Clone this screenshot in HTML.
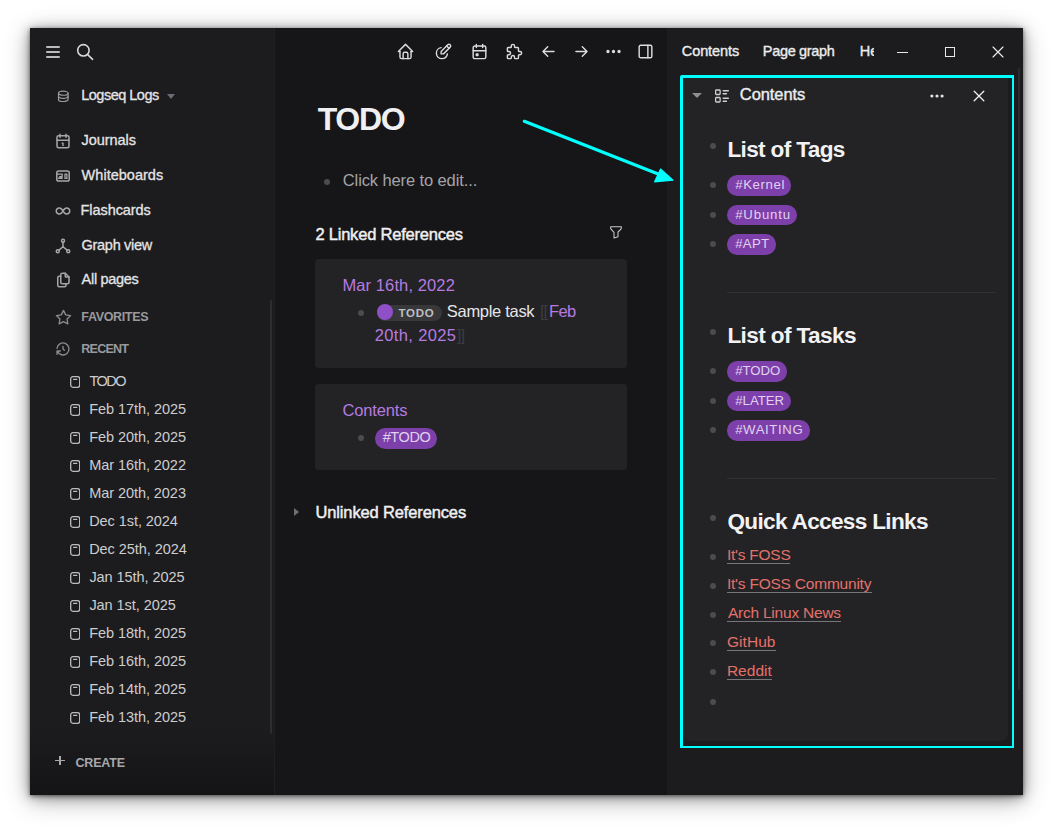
<!DOCTYPE html>
<html lang="en"><head><meta charset="utf-8"><title>TODO - Logseq</title><style>
html,body{margin:0;padding:0;}
body{width:1053px;height:827px;background:#fff;position:relative;overflow:hidden;font-family:"Liberation Sans", sans-serif;}
.b{position:absolute;}
.t{position:absolute;white-space:nowrap;}
.win{box-shadow:0 1px 4px rgba(0,0,0,.5), 0 2px 12px rgba(0,0,0,.34), 0 5px 24px rgba(0,0,0,.3);}
</style></head>
<body>
<div class="b win" style="left:30px;top:28px;width:993px;height:767px;background:#1c1c1e;"></div>
<div class="b" style="left:275px;top:28px;width:392px;height:767px;background:#161618;"></div>
<div class="b" style="left:274px;top:28px;width:1px;height:767px;background:#202022;"></div>
<div class="b" style="left:45.6px;top:46.25px;width:14.8px;height:1.6px;background:#bababc;border-radius:1px;"></div>
<div class="b" style="left:45.6px;top:51.25px;width:14.8px;height:1.6px;background:#bababc;border-radius:1px;"></div>
<div class="b" style="left:45.6px;top:56.25px;width:14.8px;height:1.6px;background:#bababc;border-radius:1px;"></div>
<svg class="b" style="left:75px;top:42px;" width="20" height="20" viewBox="0 0 20 20" fill="none" stroke="#d8d8da" stroke-width="1.6" stroke-linecap="round" stroke-linejoin="round"><circle cx="8.4" cy="8.3" r="5.7"/><path d="M12.7 12.6L17.6 17.3"/></svg>
<svg class="b" style="left:56.6px;top:89.6px;" width="12.6" height="12.6" viewBox="0 0 20 20" fill="none" stroke="#9c9ca0" stroke-width="1.9" stroke-linecap="round" stroke-linejoin="round"><ellipse cx="10" cy="5" rx="7.6" ry="3.3"/><path d="M2.4 5v10a7.6 3.3 0 0 0 15.2 0v-10"/><path d="M2.4 10a7.6 3.3 0 0 0 15.2 0"/></svg>
<div class="t " style="left:81.20px;top:88px;font-size:14.5px;line-height:14.5px;color:#e4e4e6;letter-spacing:-0.5px;-webkit-text-stroke:0.3px #e4e4e6;">Logseq Logs</div>
<div class="b" style="left:167px;top:93.5px;width:0;height:0;border-left:4px solid transparent;border-right:4px solid transparent;border-top:5px solid #6c6c78;"></div>
<div class="t " style="left:81.60px;top:133px;font-size:14.5px;line-height:14.5px;color:#e4e4e6;letter-spacing:-0.06px;-webkit-text-stroke:0.3px #e4e4e6;">Journals</div>
<div class="t " style="left:81.60px;top:168px;font-size:14.5px;line-height:14.5px;color:#e4e4e6;letter-spacing:0.02px;-webkit-text-stroke:0.3px #e4e4e6;">Whiteboards</div>
<div class="t " style="left:80.60px;top:203px;font-size:14.5px;line-height:14.5px;color:#e4e4e6;letter-spacing:-0.08px;-webkit-text-stroke:0.3px #e4e4e6;">Flashcards</div>
<div class="t " style="left:81.60px;top:238px;font-size:14.5px;line-height:14.5px;color:#e4e4e6;letter-spacing:-0.3px;-webkit-text-stroke:0.3px #e4e4e6;">Graph view</div>
<div class="t " style="left:81.60px;top:272px;font-size:14.5px;line-height:14.5px;color:#e4e4e6;letter-spacing:-0.3px;-webkit-text-stroke:0.3px #e4e4e6;">All pages</div>
<svg class="b" style="left:54px;top:132.2px;" width="18" height="18" viewBox="0 0 24 24" fill="none" stroke="#a6a6aa" stroke-width="2" stroke-linecap="round" stroke-linejoin="round"><rect x="4" y="5" width="16" height="16" rx="2"/><path d="M16 3v4M8 3v4M4 11h16"/><path d="M11 15h1v3" stroke-width="1.9"/></svg>
<svg class="b" style="left:54px;top:167px;" width="18" height="18" viewBox="0 0 24 24" fill="none" stroke="#a6a6aa" stroke-width="2" stroke-linecap="round" stroke-linejoin="round"><rect x="3.7" y="5.4" width="16.6" height="13.2" rx="2.4"/><path d="M3.7 9.4h7.2v3.6h-3.4M6 15h5M14.6 9.4h2.6v5.8h-2.6z" stroke-width="1.7"/></svg>
<svg class="b" style="left:54px;top:202px;" width="18" height="18" viewBox="0 0 24 24" fill="none" stroke="#a6a6aa" stroke-width="2" stroke-linecap="round" stroke-linejoin="round"><path d="M9.828 9.172a4 4 0 1 0 0 5.656a10 10 0 0 0 2.172 -2.828a10 10 0 0 1 2.172 -2.828a4 4 0 1 1 0 5.656a10 10 0 0 1 -2.172 -2.828a10 10 0 0 0 -2.172 -2.828"/></svg>
<svg class="b" style="left:54px;top:237.1px;" width="18" height="18" viewBox="0 0 24 24" fill="none" stroke="#a6a6aa" stroke-width="2" stroke-linecap="round" stroke-linejoin="round"><circle cx="12" cy="5" r="2"/><circle cx="5" cy="19" r="2"/><circle cx="19" cy="19" r="2"/><path d="M6.5 17.5l5.500 -4.500l5.500 4.500"/><path d="M12 7v6"/></svg>
<svg class="b" style="left:54px;top:270.7px;" width="18" height="18" viewBox="0 0 24 24" fill="none" stroke="#a6a6aa" stroke-width="2" stroke-linecap="round" stroke-linejoin="round"><path d="M15 3v4a1 1 0 0 0 1 1h4"/><path d="M18 17h-7a2 2 0 0 1 -2 -2v-10a2 2 0 0 1 2 -2h4l5 5v7a2 2 0 0 1 -2 2z"/><path d="M16 17v2a2 2 0 0 1 -2 2h-7a2 2 0 0 1 -2 -2v-10a2 2 0 0 1 2 -2h2"/></svg>
<svg class="b" style="left:54.7px;top:308.9px;" width="17" height="17" viewBox="0 0 24 24" fill="none" stroke="#8c8c90" stroke-width="1.9" stroke-linecap="round" stroke-linejoin="round"><path d="M12 17.75l-6.172 3.245l1.179 -6.873l-5 -4.867l6.900 -1l3.086 -6.253l3.086 6.253l6.900 1l-5 4.867l1.179 6.873z"/></svg>
<div class="t " style="left:81.30px;top:311px;font-size:12.5px;line-height:12.5px;color:#9a9a9e;font-weight:700;letter-spacing:-0.34px;">FAVORITES</div>
<svg class="b" style="left:54.8px;top:340.8px;" width="16" height="16" viewBox="0 0 24 24" fill="none" stroke="#8c8c90" stroke-width="2" stroke-linecap="round" stroke-linejoin="round"><path d="M12 8v4l2 2"/><path d="M3.050 11a9 9 0 1 1 .500 4m-.500 5v-5h5"/></svg>
<div class="t " style="left:81.30px;top:343px;font-size:12.5px;line-height:12.5px;color:#9a9a9e;font-weight:700;letter-spacing:-0.74px;">RECENT</div>
<div class="t " style="left:89.40px;top:374px;font-size:14.5px;line-height:14.5px;color:#cdcdd0;letter-spacing:-1.5px;">TODO</div>
<svg class="b" style="left:69.6px;top:375.9px;" width="10.4" height="12" viewBox="0 0 10.4 12" fill="none" stroke="#bcbcc0" stroke-width="1.3" stroke-linecap="round" stroke-linejoin="round"><rect x="0.7" y="0.7" width="9" height="10.6" rx="2.2"/><path d="M3.6 3.4h3.2" stroke-width="1.2"/></svg>
<div class="t " style="left:89.20px;top:402px;font-size:14.5px;line-height:14.5px;color:#cdcdd0;letter-spacing:-0.06px;">Feb 17th, 2025</div>
<svg class="b" style="left:69.6px;top:403.9px;" width="10.4" height="12" viewBox="0 0 10.4 12" fill="none" stroke="#bcbcc0" stroke-width="1.3" stroke-linecap="round" stroke-linejoin="round"><rect x="0.7" y="0.7" width="9" height="10.6" rx="2.2"/><path d="M3.6 3.4h3.2" stroke-width="1.2"/></svg>
<div class="t " style="left:89.20px;top:430px;font-size:14.5px;line-height:14.5px;color:#cdcdd0;letter-spacing:-0.06px;">Feb 20th, 2025</div>
<svg class="b" style="left:69.6px;top:431.9px;" width="10.4" height="12" viewBox="0 0 10.4 12" fill="none" stroke="#bcbcc0" stroke-width="1.3" stroke-linecap="round" stroke-linejoin="round"><rect x="0.7" y="0.7" width="9" height="10.6" rx="2.2"/><path d="M3.6 3.4h3.2" stroke-width="1.2"/></svg>
<div class="t " style="left:89.20px;top:458px;font-size:14.5px;line-height:14.5px;color:#cdcdd0;letter-spacing:-0.06px;">Mar 16th, 2022</div>
<svg class="b" style="left:69.6px;top:459.9px;" width="10.4" height="12" viewBox="0 0 10.4 12" fill="none" stroke="#bcbcc0" stroke-width="1.3" stroke-linecap="round" stroke-linejoin="round"><rect x="0.7" y="0.7" width="9" height="10.6" rx="2.2"/><path d="M3.6 3.4h3.2" stroke-width="1.2"/></svg>
<div class="t " style="left:89.20px;top:486px;font-size:14.5px;line-height:14.5px;color:#cdcdd0;letter-spacing:-0.06px;">Mar 20th, 2023</div>
<svg class="b" style="left:69.6px;top:487.9px;" width="10.4" height="12" viewBox="0 0 10.4 12" fill="none" stroke="#bcbcc0" stroke-width="1.3" stroke-linecap="round" stroke-linejoin="round"><rect x="0.7" y="0.7" width="9" height="10.6" rx="2.2"/><path d="M3.6 3.4h3.2" stroke-width="1.2"/></svg>
<div class="t " style="left:89.20px;top:514px;font-size:14.5px;line-height:14.5px;color:#cdcdd0;letter-spacing:-0.06px;">Dec 1st, 2024</div>
<svg class="b" style="left:69.6px;top:515.9px;" width="10.4" height="12" viewBox="0 0 10.4 12" fill="none" stroke="#bcbcc0" stroke-width="1.3" stroke-linecap="round" stroke-linejoin="round"><rect x="0.7" y="0.7" width="9" height="10.6" rx="2.2"/><path d="M3.6 3.4h3.2" stroke-width="1.2"/></svg>
<div class="t " style="left:89.20px;top:542px;font-size:14.5px;line-height:14.5px;color:#cdcdd0;letter-spacing:-0.06px;">Dec 25th, 2024</div>
<svg class="b" style="left:69.6px;top:543.9px;" width="10.4" height="12" viewBox="0 0 10.4 12" fill="none" stroke="#bcbcc0" stroke-width="1.3" stroke-linecap="round" stroke-linejoin="round"><rect x="0.7" y="0.7" width="9" height="10.6" rx="2.2"/><path d="M3.6 3.4h3.2" stroke-width="1.2"/></svg>
<div class="t " style="left:89.40px;top:570px;font-size:14.5px;line-height:14.5px;color:#cdcdd0;letter-spacing:-0.06px;">Jan 15th, 2025</div>
<svg class="b" style="left:69.6px;top:571.9px;" width="10.4" height="12" viewBox="0 0 10.4 12" fill="none" stroke="#bcbcc0" stroke-width="1.3" stroke-linecap="round" stroke-linejoin="round"><rect x="0.7" y="0.7" width="9" height="10.6" rx="2.2"/><path d="M3.6 3.4h3.2" stroke-width="1.2"/></svg>
<div class="t " style="left:89.40px;top:598px;font-size:14.5px;line-height:14.5px;color:#cdcdd0;letter-spacing:-0.06px;">Jan 1st, 2025</div>
<svg class="b" style="left:69.6px;top:599.9px;" width="10.4" height="12" viewBox="0 0 10.4 12" fill="none" stroke="#bcbcc0" stroke-width="1.3" stroke-linecap="round" stroke-linejoin="round"><rect x="0.7" y="0.7" width="9" height="10.6" rx="2.2"/><path d="M3.6 3.4h3.2" stroke-width="1.2"/></svg>
<div class="t " style="left:89.20px;top:626px;font-size:14.5px;line-height:14.5px;color:#cdcdd0;letter-spacing:-0.06px;">Feb 18th, 2025</div>
<svg class="b" style="left:69.6px;top:627.9px;" width="10.4" height="12" viewBox="0 0 10.4 12" fill="none" stroke="#bcbcc0" stroke-width="1.3" stroke-linecap="round" stroke-linejoin="round"><rect x="0.7" y="0.7" width="9" height="10.6" rx="2.2"/><path d="M3.6 3.4h3.2" stroke-width="1.2"/></svg>
<div class="t " style="left:89.20px;top:654px;font-size:14.5px;line-height:14.5px;color:#cdcdd0;letter-spacing:-0.06px;">Feb 16th, 2025</div>
<svg class="b" style="left:69.6px;top:655.9px;" width="10.4" height="12" viewBox="0 0 10.4 12" fill="none" stroke="#bcbcc0" stroke-width="1.3" stroke-linecap="round" stroke-linejoin="round"><rect x="0.7" y="0.7" width="9" height="10.6" rx="2.2"/><path d="M3.6 3.4h3.2" stroke-width="1.2"/></svg>
<div class="t " style="left:89.20px;top:682px;font-size:14.5px;line-height:14.5px;color:#cdcdd0;letter-spacing:-0.06px;">Feb 14th, 2025</div>
<svg class="b" style="left:69.6px;top:683.9px;" width="10.4" height="12" viewBox="0 0 10.4 12" fill="none" stroke="#bcbcc0" stroke-width="1.3" stroke-linecap="round" stroke-linejoin="round"><rect x="0.7" y="0.7" width="9" height="10.6" rx="2.2"/><path d="M3.6 3.4h3.2" stroke-width="1.2"/></svg>
<div class="t " style="left:89.20px;top:710px;font-size:14.5px;line-height:14.5px;color:#cdcdd0;letter-spacing:-0.06px;">Feb 13th, 2025</div>
<svg class="b" style="left:69.6px;top:711.9px;" width="10.4" height="12" viewBox="0 0 10.4 12" fill="none" stroke="#bcbcc0" stroke-width="1.3" stroke-linecap="round" stroke-linejoin="round"><rect x="0.7" y="0.7" width="9" height="10.6" rx="2.2"/><path d="M3.6 3.4h3.2" stroke-width="1.2"/></svg>
<div class="b" style="left:270px;top:300px;width:2.2px;height:434px;background:#2d2d31;border-radius:1px;"></div>
<div class="b" style="left:30px;top:730px;width:244px;height:65px;background:linear-gradient(to bottom, rgba(18,18,20,0), rgba(18,18,20,.75));"></div>
<div class="b" style="left:55.4px;top:760.2px;width:9.2px;height:1.3px;background:#a8a8ac;"></div>
<div class="b" style="left:59.35px;top:756.25px;width:1.3px;height:9.2px;background:#a8a8ac;"></div>
<div class="t " style="left:75.40px;top:757px;font-size:12.5px;line-height:12.5px;color:#a8a8ac;font-weight:700;letter-spacing:-0.14px;">CREATE</div>
<svg class="b" style="left:395.5px;top:42.1px;" width="19" height="19" viewBox="0 0 24 24" fill="none" stroke="#dcdcde" stroke-width="1.8" stroke-linecap="round" stroke-linejoin="round"><path d="M5 12H3l9-9 9 9h-2"/><path d="M5 12v7a2 2 0 0 0 2 2h10a2 2 0 0 0 2-2v-7"/><path d="M9 21v-6a2 2 0 0 1 2-2h2a2 2 0 0 1 2 2v6"/></svg>
<svg class="b" style="left:433.5px;top:42.1px;" width="19" height="19" viewBox="0 0 24 24" fill="none" stroke="#dcdcde" stroke-width="1.8" stroke-linecap="round" stroke-linejoin="round"><path d="M12 15l8.385-8.415a2.1 2.1 0 0 0-2.97-2.97L9 12v3h3z"/><path d="M16 5l3 3"/><path d="M9 7.07A7 7 0 0 0 10 21a7 7 0 0 0 6.929-6"/></svg>
<svg class="b" style="left:470.0px;top:42.1px;" width="19" height="19" viewBox="0 0 24 24" fill="none" stroke="#dcdcde" stroke-width="1.8" stroke-linecap="round" stroke-linejoin="round"><rect x="4" y="5" width="16" height="16" rx="2"/><path d="M16 3v4M8 3v4M4 11h16"/><rect x="8" y="15" width="2" height="2"/></svg>
<svg class="b" style="left:505.0px;top:42.1px;" width="19" height="19" viewBox="0 0 24 24" fill="none" stroke="#dcdcde" stroke-width="1.8" stroke-linecap="round" stroke-linejoin="round"><path d="M4 7h3a1 1 0 0 0 1-1V5a2 2 0 0 1 4 0v1a1 1 0 0 0 1 1h3a1 1 0 0 1 1 1v3a1 1 0 0 0 1 1h1a2 2 0 0 1 0 4h-1a1 1 0 0 0-1 1v3a1 1 0 0 1-1 1h-3a1 1 0 0 1-1-1v-1a2 2 0 0 0-4 0v1a1 1 0 0 1-1 1H4a1 1 0 0 1-1-1v-3a1 1 0 0 1 1-1h1a2 2 0 0 0 0-4H4a1 1 0 0 1-1-1V8a1 1 0 0 1 1-1"/></svg>
<svg class="b" style="left:539.0px;top:42.1px;" width="19" height="19" viewBox="0 0 24 24" fill="none" stroke="#dcdcde" stroke-width="1.8" stroke-linecap="round" stroke-linejoin="round"><path d="M5 12h14M5 12l6 6M5 12l6-6"/></svg>
<svg class="b" style="left:571.5px;top:42.1px;" width="19" height="19" viewBox="0 0 24 24" fill="none" stroke="#dcdcde" stroke-width="1.8" stroke-linecap="round" stroke-linejoin="round"><path d="M5 12h14M13 18l6-6M13 6l6 6"/></svg>
<svg class="b" style="left:603.5px;top:42.1px;" width="19" height="19" viewBox="0 0 24 24" fill="none" stroke="#dcdcde" stroke-width="2.2" stroke-linecap="round" stroke-linejoin="round"><circle cx="5" cy="12" r="1"/><circle cx="12" cy="12" r="1"/><circle cx="19" cy="12" r="1"/></svg>
<svg class="b" style="left:635.5px;top:42.1px;" width="19" height="19" viewBox="0 0 24 24" fill="none" stroke="#dcdcde" stroke-width="1.8" stroke-linecap="round" stroke-linejoin="round"><rect x="4" y="4" width="16" height="16" rx="2"/><path d="M15 4v16"/></svg>
<div class="t " style="left:317.70px;top:103px;font-size:32px;line-height:32px;color:#f0f0f2;font-weight:700;letter-spacing:-1.3px;">TODO</div>
<div class="b" style="left:323.7px;top:179px;width:6px;height:6px;background:#4c4c50;border-radius:50%;"></div>
<div class="t " style="left:342.80px;top:172px;font-size:16.5px;line-height:16.5px;color:#a4a4a8;letter-spacing:-0.11px;">Click here to edit...</div>
<div class="t " style="left:315.40px;top:226px;font-size:16.5px;line-height:16.5px;color:#f0f0f2;letter-spacing:-0.21px;-webkit-text-stroke:0.45px #f0f0f2;">2 Linked References</div>
<svg class="b" style="left:608px;top:224px;" width="16" height="16" viewBox="0 0 24 24" fill="none" stroke="#c8c8cc" stroke-width="1.6" stroke-linecap="round" stroke-linejoin="round"><path d="M4 4h16v2.172a2 2 0 0 1 -.586 1.414l-4.414 4.414v7l-6 2v-8.5l-4.480 -4.928a2 2 0 0 1 -.52 -1.345v-2.227z"/></svg>
<div class="b" style="left:315px;top:259px;width:312px;height:109px;background:#232325;border-radius:4px;"></div>
<div class="t " style="left:342.40px;top:277px;font-size:16.5px;line-height:16.5px;color:#b57be0;letter-spacing:0.11px;">Mar 16th, 2022</div>
<div class="b" style="left:357.8px;top:310px;width:6px;height:6px;background:#4c4c50;border-radius:50%;"></div>
<div class="b" style="left:377px;top:305px;width:64.7px;height:16px;background:#38383b;border-radius:8px;"></div>
<div class="b" style="left:376.9px;top:304.4px;width:16px;height:16px;background:#8f4fc6;border-radius:50%;"></div>
<div class="t " style="left:398.50px;top:308px;font-size:11.5px;line-height:11.5px;color:#bebec2;font-weight:700;letter-spacing:0.73px;">TODO</div>
<div class="t " style="left:446.80px;top:303px;font-size:16.5px;line-height:16.5px;color:#e6e6e8;letter-spacing:-0.3px;">Sample task</div>
<div class="t " style="left:540.00px;top:303px;font-size:16.5px;line-height:16.5px;color:#3c3c40;letter-spacing:-1.0px;">[[</div>
<div class="t " style="left:549.00px;top:303px;font-size:16.5px;line-height:16.5px;color:#b57be0;letter-spacing:-0.65px;">Feb</div>
<div class="t " style="left:374.80px;top:327px;font-size:16.5px;line-height:16.5px;color:#b57be0;letter-spacing:0.36px;">20th, 2025</div>
<div class="t " style="left:456.80px;top:327px;font-size:16.5px;line-height:16.5px;color:#3c3c40;letter-spacing:-1.0px;">]]</div>
<div class="b" style="left:315px;top:384px;width:312px;height:85.5px;background:#232325;border-radius:4px;"></div>
<div class="t " style="left:342.40px;top:402px;font-size:16.5px;line-height:16.5px;color:#b57be0;letter-spacing:-0.13px;">Contents</div>
<div class="b" style="left:357.7px;top:434.7px;width:6px;height:6px;background:#4c4c50;border-radius:50%;"></div>
<div class="b" style="left:374.9px;top:428px;width:62.2px;height:21px;background:#7d40ab;border-radius:10.5px;"></div>
<div class="t " style="left:382.70px;top:430px;font-size:14.5px;line-height:14.5px;color:#e0d2ee;letter-spacing:-0.4px;">#TODO</div>
<div class="b" style="left:294px;top:508px;width:0;height:0;border-top:4.8px solid transparent;border-bottom:4.8px solid transparent;border-left:5.8px solid #707074;"></div>
<div class="t " style="left:315.50px;top:504px;font-size:16.5px;line-height:16.5px;color:#f0f0f2;letter-spacing:-0.14px;-webkit-text-stroke:0.45px #f0f0f2;">Unlinked References</div>
<div class="t " style="left:681.80px;top:44px;font-size:14.5px;line-height:14.5px;color:#ececee;letter-spacing:-0.1px;-webkit-text-stroke:0.35px #ececee;">Contents</div>
<div class="t " style="left:762.80px;top:44px;font-size:14.5px;line-height:14.5px;color:#ececee;letter-spacing:-0.32px;-webkit-text-stroke:0.35px #ececee;">Page graph</div>
<div class="t " style="left:859.80px;top:44px;font-size:14.5px;line-height:14.5px;color:#ececee;letter-spacing:0.1px;-webkit-text-stroke:0.35px #ececee;width:14.6px;overflow:hidden;">Help</div>
<div class="b" style="left:897px;top:51.8px;width:11px;height:1px;background:#e8e8ea;"></div>
<div class="b" style="left:945px;top:47px;width:8px;height:8px;border:1px solid #e8e8ea;"></div>
<svg class="b" style="left:992px;top:46px;" width="12" height="12" viewBox="0 0 12 12" fill="none" stroke="#f0f0f2" stroke-width="1.1" stroke-linecap="round" stroke-linejoin="round"><path d="M1 1L11 11M11 1L1 11"/></svg>
<div class="b" style="left:683px;top:78px;width:325px;height:662.5px;background:#232325;border-radius:0 0 7px 7px;"></div>
<div class="b" style="left:1017.6px;top:68px;width:2.6px;height:622px;background:#2c2c30;border-radius:1px;"></div>
<div class="b" style="left:692.4px;top:93px;width:0;height:0;border-left:5px solid transparent;border-right:5px solid transparent;border-top:5.4px solid #8e8e92;"></div>
<svg class="b" style="left:713px;top:87px;" width="18" height="18" viewBox="0 0 24 24" fill="none" stroke="#d0d0d4" stroke-width="1.7" stroke-linecap="round" stroke-linejoin="round"><rect x="3.5" y="4" width="6" height="6" rx="1"/><rect x="3.5" y="14" width="6" height="6" rx="1"/><path d="M13.5 5h7M13.5 9h4.5M13.5 15h7M13.5 19h4.5"/></svg>
<div class="t " style="left:739.80px;top:86px;font-size:16.5px;line-height:16.5px;color:#ececee;letter-spacing:-0.07px;-webkit-text-stroke:0.4px #ececee;">Contents</div>
<svg class="b" style="left:928px;top:87px;" width="18" height="18" viewBox="0 0 24 24" fill="none" stroke="#e4e4e6" stroke-width="2.2" stroke-linecap="round" stroke-linejoin="round"><circle cx="5.2" cy="12" r="1"/><circle cx="12" cy="12" r="1"/><circle cx="18.8" cy="12" r="1"/></svg>
<svg class="b" style="left:973px;top:90.2px;" width="12" height="12" viewBox="0 0 12 12" fill="none" stroke="#f0f0f2" stroke-width="1.3" stroke-linecap="round" stroke-linejoin="round"><path d="M1.2 1.2L10.8 10.8M10.8 1.2L1.2 10.8"/></svg>
<div class="b" style="left:709.8px;top:142.8px;width:6px;height:6px;background:#4c4c50;border-radius:50%;"></div>
<div class="t " style="left:727.40px;top:139px;font-size:22.6px;line-height:22.6px;color:#f2f2f4;font-weight:700;letter-spacing:-0.65px;">List of Tags</div>
<div class="b" style="left:709.8px;top:182.2px;width:6px;height:6px;background:#4c4c50;border-radius:50%;"></div>
<div class="b" style="left:727px;top:175.1px;width:64px;height:20.6px;background:#7d40ab;border-radius:10.3px;"></div>
<div class="t " style="left:735.20px;top:178px;font-size:13.2px;line-height:13.2px;color:#e0d2ee;letter-spacing:0.63px;">#Kernel</div>
<div class="b" style="left:709.8px;top:211.9px;width:6px;height:6px;background:#4c4c50;border-radius:50%;"></div>
<div class="b" style="left:727px;top:204.8px;width:70px;height:20.6px;background:#7d40ab;border-radius:10.3px;"></div>
<div class="t " style="left:735.20px;top:208px;font-size:13.2px;line-height:13.2px;color:#e0d2ee;letter-spacing:0.85px;">#Ubuntu</div>
<div class="b" style="left:709.8px;top:241.2px;width:6px;height:6px;background:#4c4c50;border-radius:50%;"></div>
<div class="b" style="left:727px;top:234.1px;width:48.9px;height:20.6px;background:#7d40ab;border-radius:10.3px;"></div>
<div class="t " style="left:735.20px;top:237px;font-size:13.2px;line-height:13.2px;color:#e0d2ee;letter-spacing:0.3px;">#APT</div>
<div class="b" style="left:727px;top:292px;width:269px;height:1px;background:#303034;"></div>
<div class="b" style="left:709.8px;top:328.8px;width:6px;height:6px;background:#4c4c50;border-radius:50%;"></div>
<div class="t " style="left:727.40px;top:325px;font-size:22.6px;line-height:22.6px;color:#f2f2f4;font-weight:700;letter-spacing:-0.61px;">List of Tasks</div>
<div class="b" style="left:709.8px;top:368.20000000000005px;width:6px;height:6px;background:#4c4c50;border-radius:50%;"></div>
<div class="b" style="left:727px;top:361.1px;width:60px;height:20.6px;background:#7d40ab;border-radius:10.3px;"></div>
<div class="t " style="left:735.20px;top:364px;font-size:13.2px;line-height:13.2px;color:#e0d2ee;">#TODO</div>
<div class="b" style="left:709.8px;top:397.90000000000003px;width:6px;height:6px;background:#4c4c50;border-radius:50%;"></div>
<div class="b" style="left:727px;top:390.8px;width:64px;height:20.6px;background:#7d40ab;border-radius:10.3px;"></div>
<div class="t " style="left:735.20px;top:394px;font-size:13.2px;line-height:13.2px;color:#e0d2ee;letter-spacing:0.02px;">#LATER</div>
<div class="b" style="left:709.8px;top:427.20000000000005px;width:6px;height:6px;background:#4c4c50;border-radius:50%;"></div>
<div class="b" style="left:727px;top:420.1px;width:83.1px;height:20.6px;background:#7d40ab;border-radius:10.3px;"></div>
<div class="t " style="left:735.20px;top:423px;font-size:13.2px;line-height:13.2px;color:#e0d2ee;letter-spacing:0.6px;">#WAITING</div>
<div class="b" style="left:727px;top:478px;width:269px;height:1px;background:#303034;"></div>
<div class="b" style="left:709.8px;top:514.8px;width:6px;height:6px;background:#4c4c50;border-radius:50%;"></div>
<div class="t " style="left:727.40px;top:511px;font-size:22.6px;line-height:22.6px;color:#f2f2f4;font-weight:700;letter-spacing:-0.68px;">Quick Access Links</div>
<div class="b" style="left:709.8px;top:553.6px;width:6px;height:6px;background:#4c4c50;border-radius:50%;"></div>
<div class="t " style="left:726.90px;top:547px;font-size:15.5px;line-height:15.5px;color:#e3716b;letter-spacing:-0.25px;">It&#39;s FOSS</div>
<div class="b" style="left:727.4px;top:563px;width:62.9px;height:1px;background:#77777b;"></div>
<div class="b" style="left:709.8px;top:582.5500000000001px;width:6px;height:6px;background:#4c4c50;border-radius:50%;"></div>
<div class="t " style="left:726.90px;top:576px;font-size:15.5px;line-height:15.5px;color:#e3716b;letter-spacing:-0.22px;">It&#39;s FOSS Community</div>
<div class="b" style="left:727.4px;top:592px;width:145.0px;height:1px;background:#77777b;"></div>
<div class="b" style="left:709.8px;top:611.5px;width:6px;height:6px;background:#4c4c50;border-radius:50%;"></div>
<div class="t " style="left:727.90px;top:605px;font-size:15.5px;line-height:15.5px;color:#e3716b;letter-spacing:-0.22px;">Arch Linux News</div>
<div class="b" style="left:727.4px;top:621px;width:113.8px;height:1px;background:#77777b;"></div>
<div class="b" style="left:709.8px;top:640.45px;width:6px;height:6px;background:#4c4c50;border-radius:50%;"></div>
<div class="t " style="left:726.90px;top:634px;font-size:15.5px;line-height:15.5px;color:#e3716b;letter-spacing:0.06px;">GitHub</div>
<div class="b" style="left:727.4px;top:650px;width:48.2px;height:1px;background:#77777b;"></div>
<div class="b" style="left:709.8px;top:669.4px;width:6px;height:6px;background:#4c4c50;border-radius:50%;"></div>
<div class="t " style="left:726.90px;top:663px;font-size:15.5px;line-height:15.5px;color:#e3716b;letter-spacing:0.02px;">Reddit</div>
<div class="b" style="left:727.4px;top:679px;width:45.0px;height:1px;background:#77777b;"></div>
<div class="b" style="left:709.8px;top:698.5px;width:6px;height:6px;background:#4c4c50;border-radius:50%;"></div>
<div class="b" style="left:680px;top:75px;width:334px;height:673px;box-sizing:border-box;border:solid #00ffff;border-width:3px 2px 2px 3px;border-radius:2px 0 0 0;"></div>
<svg class="b" style="left:0;top:0" width="1053" height="827" viewBox="0 0 1053 827"><path d="M524.3 121.3L662 175.6" stroke="#00ffff" stroke-width="3.2" stroke-linecap="round" fill="none"/><path d="M660.6 169L673 180.2L654.6 181.8Z" fill="#00ffff" stroke="#00ffff" stroke-width="1.2" stroke-linejoin="round"/></svg>
</body></html>
